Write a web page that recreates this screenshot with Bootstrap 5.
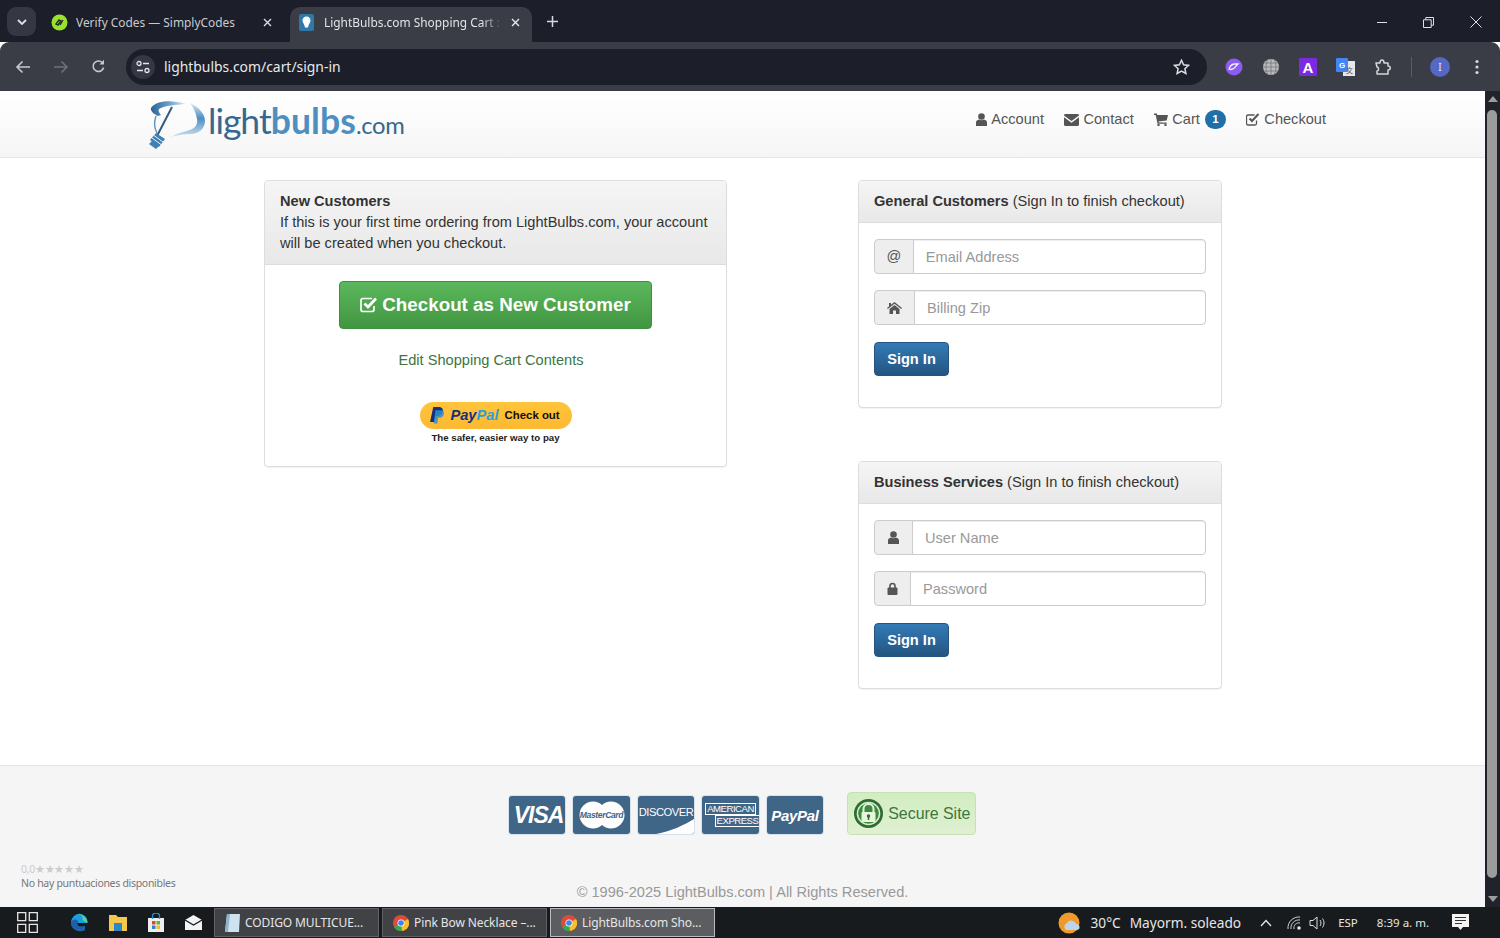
<!DOCTYPE html>
<html lang="en"><head><meta charset="utf-8"><title>LightBulbs.com Shopping Cart</title>
<link href="https://cdn.jsdelivr.net/npm/bootstrap@5.3.0/dist/css/bootstrap.min.css" rel="stylesheet">
<style>
html,body{height:938px;overflow:hidden;margin:0}
body{font-family:"Liberation Sans",Arial,sans-serif;font-size:14.6px;line-height:21px;color:#333;background:#fff}
.shell{height:938px}
.tabstrip{height:42px;background:#1c1f2a;font-family:"Noto Sans",sans-serif;font-size:11.9px;color:#c9cad0;padding-left:7px}
.tabmenu{width:29px;height:29px;background:#353842;border-radius:9px;margin-top:7px;flex:none}
.ctab{height:35px;margin-top:7px;width:242px;flex:none;padding:0 12px 5px 9px;border-radius:10px 10px 0 0;white-space:nowrap;overflow:hidden}
.ctab.first{width:241px;margin-left:6px;padding-left:9px;margin-right:7px;padding-right:11px}
.ctab.active{background:#3a3c46;color:#e3e4e8}
.tabtitle{flex:1;overflow:hidden;margin-left:8px;min-width:0}
.active .tabtitle{-webkit-mask-image:linear-gradient(90deg,#000 88%,transparent);mask-image:linear-gradient(90deg,#000 88%,transparent)}
.plusx{margin:16px 0 0 15px}
.winbtns{margin-left:auto;gap:36px;padding:2px 18px 0 0}
.toolbarx{height:49px;background:#3a3c46;border-radius:9px 9px 0 0;padding:0 9px 0 15px}
.omni{margin:0 0 0 15px;width:1081px;height:36px;background:#1c1f2a;border-radius:18px;color:#e8e9ec;font-family:"Noto Sans",sans-serif;font-size:13.9px;padding:0 17px 0 5px}
.sitebtn{width:24px;height:24px;border-radius:50%;background:#353842;margin-right:9px}
.navgap{gap:22px;width:96px}
.ext{gap:19px;margin-left:18px}
.sepv{width:1px;height:20px;background:#5a5c66;margin:0 -1px 0 0}
.avatarx{width:20px;height:20px;border-radius:50%;background:#5468c4;color:#e8eaf6;font:10px "Noto Sans",sans-serif}
.dotsx{margin-left:6px}
.pagewrap{height:816px;min-height:0}
.pagecol{flex:1;min-width:0}
.topbar{height:67px;background:linear-gradient(#fff,#f6f6f6);border-bottom:1px solid #e6e6e6;padding:0 159px 0 148px;align-items:flex-start}
.logobox{margin-top:8px;height:50px;width:256px;position:relative}
.logoword{font-family:"Lato",sans-serif;font-size:35.5px;line-height:50px;color:#35688f;font-weight:400;letter-spacing:-1px;margin-left:60px;white-space:nowrap;margin-top:-3px;display:block}
.logoword b{color:#4e8fc0;font-weight:700;letter-spacing:.1px}
.logoword i{font-style:normal;font-size:23.8px;letter-spacing:-.3px}
.toplinks{gap:20.5px;margin-top:18px;color:#555;line-height:21px}
.toplinks a{color:#555;text-decoration:none;display:flex;align-items:center;gap:4px;white-space:nowrap}
.cartnum{background:#1f6fa8;color:#fff;font-size:11.5px;width:21px;height:19px;border-radius:10px;padding:0;line-height:19px;margin-left:1px;font-weight:700}
.contentx{flex:1;min-height:0;padding:22px 263px 0 264px;justify-content:space-between}
.leftc{width:463px}
.rightc{width:364px;gap:53px}
.panelx{border-color:#ddd;border-radius:4px;box-shadow:0 1px 1px rgba(0,0,0,.05)}
.panelx .card-header{background:linear-gradient(#f5f5f5,#e8e8e8);border-bottom:1px solid #ddd;padding:10px 15px;color:#333;line-height:21px;border-radius:3px 3px 0 0}
.headtxt b{color:#333}
.panelx .card-body{padding:16px 15px}
.bigbtn{width:313px;height:48px;background:linear-gradient(#5cb85c,#419641);border:1px solid #3e8f3e;color:#fff;font-weight:700;font-size:18.8px;line-height:1;border-radius:4px;gap:4px;padding:0}
.bigbtn:hover{color:#fff}
.editlink{color:#3c763d;text-decoration:none;margin:21px 9px 0 0;text-align:center;display:block}
.ppbox{margin-top:31px;height:48px}
.pp{width:152px;height:27px;background:linear-gradient(#ffc439,#fdb933);border-radius:14px;gap:5px;color:#111;padding-right:1px}
.pp .ppw{font-weight:700;font-style:italic;font-size:14.7px;color:#17307a}
.pp .ppw span{color:#2a9fde}
.pp .ppc{font-weight:700;font-size:11.4px;margin-left:1px}
.ppcap{font-size:9.7px;line-height:12px;font-weight:700;color:#222;text-align:center;margin-top:3px;white-space:nowrap}
.inrow{margin-bottom:16px;height:35px}
.inrow .input-group-text{background:#eee;border-color:#ccc;color:#555;padding:0 12px;font-size:14.6px;border-radius:4px 0 0 4px;justify-content:center}
.inrow .form-control{border-color:#ccc;font-size:14.6px;padding:0 12px;height:35px;color:#555;border-radius:0 4px 4px 0;box-shadow:inset 0 1px 1px rgba(0,0,0,.075)}
.inrow .form-control::placeholder{color:#999}
.inrow .atsign{padding:0 11.5px}
.signbtn{width:75px;height:34px;background:linear-gradient(#337ab7,#245580);border:1px solid #245580;color:#fff;font-weight:700;font-size:14.6px;padding:0;line-height:1;border-radius:4px;margin:1px 0 15px}
.footx{height:142px;background:#f5f5f5;border-top:1px solid #e5e5e5;position:relative;flex:none;padding-top:30px}
.payrow{gap:8px;height:44px}
.paycard{width:56.5px;height:38px;background:#3f6587;border-radius:3px;color:#fff;font-weight:700;overflow:hidden;position:relative;line-height:1;box-shadow:0 0 0 1px rgba(120,170,220,.25)}
.pcvisa{font-size:23px;letter-spacing:-1px;margin-left:3px}
.pcmc{font-size:8.6px;color:#3f6587;letter-spacing:-.4px;position:relative}
.pcdisc{font-size:11.2px;letter-spacing:-.5px;padding-top:11px;font-weight:400}
.pcamex{font-size:9.6px;letter-spacing:-.5px;font-weight:400;gap:2px}
.pcamex span{outline:1px solid #fff;padding:0 1px;line-height:10px}
.pcamex .ax2{margin-left:14px}
.pcpay{font-size:15px;letter-spacing:-.3px}
.securex{margin-left:16px;width:129px;height:43px;background:linear-gradient(#d2edc2,#dff0d0);border:1px solid #c5e3b2;border-radius:4px;color:#3c763d;font-size:15.9px;gap:4px;padding-left:5px;margin-top:-4px;white-space:nowrap}
.copyx{color:#999;font-size:14.6px;text-align:center;margin-top:42px;line-height:21px}
.ratex{position:absolute;left:21px;top:96px;font-family:"Noto Sans",sans-serif;font-size:10.5px;line-height:14px;color:#777;letter-spacing:-.3px}
.ratex div:first-child{color:#ccc}
.scrollx{width:15px;flex:none;background:#20232a;position:relative}
.thumbx{position:absolute;left:2px;right:3px;top:19px;bottom:29px;background:#9c9c9c;border-radius:5px}
.scup{position:absolute;top:5px;left:3px}
.scdn{position:absolute;bottom:5px;left:3px}
.taskx{height:31px;background:#181b1e;color:#e6e6e6;font-family:"Noto Sans",sans-serif;padding-left:17px}
.pinned{gap:21px;margin:0 12px 0 32px}
.tbutton{height:29px;width:165px;background:#404246;border:1px solid #5f6165;font-size:12px;letter-spacing:-.1px;padding-left:10px;gap:5px;margin-right:3px;white-space:nowrap}
.tbutton.on{background:#5b5d61;border-color:#b8bcc0}
.tray{margin-left:auto;font-size:13.7px;padding-right:31px}
.wxic{margin-right:8px}
.wxt{margin-left:9px}
.tchev{margin-left:17px}
.twifi{margin-left:13px}
.tsnd{margin-left:7px}
.tesp{font-size:11.5px;margin-left:11px}
.ttime{font-size:11.5px;margin-left:19px}
.tnote{margin-left:23px}
</style></head><body>
<div class="shell d-flex flex-column">
 <div class="tabstrip d-flex">
  <div class="tabmenu d-flex align-items-center justify-content-center"><svg width="10" height="6" viewBox="0 0 10 6"><path d="M1 1l4 4 4-4" fill="none" stroke="#dfe0e4" stroke-width="1.8"/></svg></div>
  <div class="ctab first d-flex align-items-center"><svg width="17" height="17" viewBox="0 0 17 17"><circle cx="8.5" cy="8.5" r="8" fill="#9be22d"/><path d="M5 10l3-4 2 1-3 4zM9 11l3-5" stroke="#20302a" stroke-width="1.4" fill="none"/></svg><span class="tabtitle">Verify Codes — SimplyCodes</span><svg width="9" height="9" viewBox="0 0 9 9"><path d="M1 1l7 7M8 1l-7 7" stroke="#dcdde1" stroke-width="1.4"/></svg></div>
  <div class="ctab active d-flex align-items-center"><svg width="17" height="17" viewBox="0 0 17 17"><rect width="15" height="17" rx="2" fill="#2f78a8"/><path d="M7.500 2.500c2.600 0 4 1.800 4 4 0 2.300-2 3.500-2.500 7H6c-.5-3.500-2.500-4.700-2.500-7 0-2.200 1.400-4 4-4z" fill="#fff"/></svg><span class="tabtitle">LightBulbs.com Shopping Cart :</span><svg width="9" height="9" viewBox="0 0 9 9" class="ms-2"><path d="M1 1l7 7M8 1l-7 7" stroke="#e8e9ec" stroke-width="1.4"/></svg></div>
  <svg class="plusx" width="11" height="11" viewBox="0 0 11 11"><path d="M5.500 0v11M0 5.500h11" stroke="#d8d9dd" stroke-width="1.5"/></svg>
  <div class="winbtns d-flex align-items-center">
   <svg width="10" height="10" viewBox="0 0 10 10"><path d="M0 5.500h10" stroke="#e0e1e4" stroke-width="1"/></svg>
   <svg width="11" height="11" viewBox="0 0 11 11"><path d="M.5 2.800h7.700v7.700H.5zM2.800 2.800V.5h7.700v7.700H8.200" fill="none" stroke="#e0e1e4"/></svg>
   <svg width="12" height="12" viewBox="0 0 12 12"><path d="M.5.500l11 11M11.500.5l-11 11" stroke="#e0e1e4"/></svg>
  </div>
 </div>
 <div class="toolbarx d-flex align-items-center">
  <div class="navgap d-flex align-items-center">
   <svg width="16" height="14" viewBox="0 0 16 14"><path d="M15 7H2M7.500 1.500L2 7l5.500 5.500" fill="none" stroke="#c8c9ce" stroke-width="1.6"/></svg>
   <svg width="16" height="14" viewBox="0 0 16 14"><path d="M1 7h13M8.500 1.500L14 7l-5.500 5.500" fill="none" stroke="#6f717a" stroke-width="1.600"/></svg>
   <svg width="15" height="15" viewBox="0 0 15 15"><path d="M12.600 8.500A5.300 5.300 0 1 1 11 3.300" fill="none" stroke="#c8c9ce" stroke-width="1.600"/><path d="M13 .8v4.600H8.500z" fill="#c8c9ce"/></svg>
  </div>
  <div class="omni d-flex align-items-center">
   <div class="sitebtn d-flex align-items-center justify-content-center"><svg width="14" height="14" viewBox="0 0 14 14"><circle cx="3" cy="3.500" r="2" fill="none" stroke="#e4e5e8" stroke-width="1.300"/><path d="M7 3.500h6M1 10.500h6" stroke="#e4e5e8" stroke-width="1.400"/><circle cx="11" cy="10.500" r="2" fill="none" stroke="#e4e5e8" stroke-width="1.300"/></svg></div>
   <span>lightbulbs.com/cart/sign-in</span>
   <svg class="ms-auto" width="17" height="16" viewBox="0 0 17 16"><path d="M8.500 1.300l2.100 4.500 4.900.6-3.600 3.300 1 4.800-4.400-2.400-4.400 2.400 1-4.800L1.500 6.400l4.900-.6z" fill="none" stroke="#dcdde1" stroke-width="1.500"/></svg>
  </div>
  <div class="ext d-flex align-items-center">
   <svg width="18" height="18" viewBox="0 0 18 18"><circle cx="9" cy="9" r="8.500" fill="#8b5cf0"/><path d="M4 11c2 1 5 0 7-3l2-2-3 0c-3 0-5 2-6 5z" fill="none" stroke="#f2ecff" stroke-width="1.300"/></svg>
   <svg width="18" height="18" viewBox="0 0 18 18"><circle cx="9" cy="9" r="8" fill="#b9babd"/><path d="M1 9h16M2.500 5h13M2.500 13h13M9 1v16M5.500 2c-2 4-2 10 0 14M12.500 2c2 4 2 10 0 14" stroke="#6d6e72" stroke-width=".7" fill="none"/></svg>
   <svg width="18" height="18" viewBox="0 0 18 18"><rect width="18" height="18" rx="1" fill="#7a2be2"/><text x="9" y="14.500" font-family="Liberation Sans" font-weight="700" font-size="15" text-anchor="middle" fill="#fff">A</text></svg>
   <svg width="19" height="18" viewBox="0 0 19 18"><rect x="7" y="3" width="12" height="15" fill="#e6e7ea"/><rect width="12" height="14" rx="1" fill="#4285f4"/><text x="6" y="10" font-family="Liberation Sans" font-weight="700" font-size="8" text-anchor="middle" fill="#fff">G</text><text x="13.500" y="15" font-family="Noto Sans CJK SC" font-size="7" text-anchor="middle" fill="#555">文</text></svg>
   <svg width="18" height="18" viewBox="0 0 18 18"><path d="M2 5h4c0-4 4-4 4 0h4v3c3 0 3 4 0 4v4H3v-3c2 0 2-4 0-4z" fill="none" stroke="#d6d7db" stroke-width="1.500" stroke-linejoin="round"/></svg>
   <div class="sepv"></div>
   <div class="avatarx d-flex align-items-center justify-content-center">I</div>
   <svg class="dotsx" width="4" height="16" viewBox="0 0 4 16"><circle cx="2" cy="2.500" r="1.600" fill="#d6d7db"/><circle cx="2" cy="8" r="1.600" fill="#d6d7db"/><circle cx="2" cy="13.500" r="1.600" fill="#d6d7db"/></svg>
  </div>
 </div>
 <div class="pagewrap d-flex">
  <div class="pagecol d-flex flex-column">
   <nav class="navbar topbar flex-nowrap d-flex justify-content-between">
    <a class="logobox text-decoration-none" href="#">
     <svg class="position-absolute top-0 start-0" width="62" height="50" viewBox="0 0 62 50"><defs><linearGradient id="lg" x1="0" x2="1" y1="0" y2="0"><stop offset="0" stop-color="#2b628f"/><stop offset=".55" stop-color="#6fa6cf"/><stop offset="1" stop-color="#e3edf5"/></linearGradient><linearGradient id="lc" x1="0" x2="0" y1="0" y2="1"><stop offset="0" stop-color="#dfeaf3"/><stop offset=".45" stop-color="#4a8fc3"/><stop offset="1" stop-color="#cfe0ee"/></linearGradient></defs>
      <path d="M3 9C7 2 22 0 38 5c-10 1-21 1-27 5-1 1 0 4 2 6l-3 1C6 15 2 12 3 9z" fill="url(#lg)"/>
      <path d="M24 8L9 37" stroke="#2f5d85" stroke-width="2" fill="none"/>
      <path d="M42 4c9 4 15 11 15 18 0 8-7 13-14 13-7 0-13 1-20 3 7-4 13-5 19-7 5-2 8-5 7-11-1-5-3-11-7-16z" fill="url(#lc)"/>
      <path d="M8 17c-2 6-2 12 1 17" stroke="#5c93bd" stroke-width="1.400" fill="none"/>
      <path d="M2 41l6-7 9 6-6 8zM1 45l3-3 7 5-3 3z" fill="#3f7fb2"/><path d="M4 39l9 6.500M6 36.500l9 6.500" stroke="#fff" stroke-width=".9"/></svg>
     <span class="logoword">light<b>bulbs</b><i>.com</i></span>
    </a>
    <div class="toplinks d-flex">
     <a href="#"><svg width="11" height="13" viewBox="0 0 11 13"><circle cx="5.500" cy="3.500" r="3.300" fill="#555"/><path d="M0 13V9.500C0 7.500 1.500 7 3 6.500c1.500 1 3.500 1 5 0 1.500.5 3 1 3 3V13z" fill="#555"/></svg>Account</a>
     <a href="#"><svg width="15" height="12" viewBox="0 0 15 12"><path d="M0 1.500C0 .6.600 0 1.500 0h12c.9 0 1.500.6 1.500 1.500L7.500 7zM0 3.300l7.500 5.400L15 3.300v7.200c0 .9-.6 1.500-1.500 1.500h-12C.6 12 0 11.400 0 10.500z" fill="#555"/></svg>Contact</a>
     <a href="#"><svg width="14" height="13" viewBox="0 0 14 13"><path d="M0 .5h2.800l.5 1.500H14l-1.300 5.500-8.200 1 .2 1h8v1.300H3.500L1.700 2H0z" fill="#555"/><circle cx="4.500" cy="12" r="1.200" fill="#555"/><circle cx="11.500" cy="12" r="1.200" fill="#555"/></svg>Cart <span class="badge cartnum">1</span></a>
     <a href="#"><svg width="14" height="13" viewBox="0 0 14 13"><path d="M10.500 7.500v3c0 .8-.5 1.500-1.500 1.500H2c-1 0-1.500-.7-1.500-1.500v-7C.5 2.700 1 2 2 2h6.500" fill="none" stroke="#555" stroke-width="1.300"/><path d="M3.500 5.500l2.500 2.500L12.500 1" fill="none" stroke="#555" stroke-width="2"/></svg>Checkout</a>
    </div>
   </nav>
   <main class="contentx d-flex">
    <div class="leftc">
     <section class="card panelx">
      <div class="card-header headtxt"><b>New Customers</b><br>If this is your first time ordering from LightBulbs.com, your account will be created when you checkout.</div>
      <div class="card-body d-flex flex-column align-items-center">
       <a href="#" class="btn bigbtn d-flex align-items-center justify-content-center"><svg width="18" height="16" viewBox="0 0 18 16"><path d="M14 9v3.500c0 1-.7 2-2 2H3c-1.300 0-2-1-2-2v-9c0-1 .7-2 2-2h9" fill="none" stroke="#fff" stroke-width="1.700"/><path d="M4.500 6.500l3.500 3.500L16 1.500" fill="none" stroke="#fff" stroke-width="2.700"/></svg>Checkout as New Customer</a>
       <a href="#" class="editlink">Edit Shopping Cart Contents</a>
       <div class="ppbox">
        <div class="pp d-flex align-items-center justify-content-center"><svg width="15" height="17" viewBox="0 0 14 16"><path d="M3 0h5c3 0 4.500 1.500 4 4-.5 3-2.500 4.500-5 4.500H5L4 14H0z" fill="#17307a"/><path d="M5 3h5c2.500 0 3.500 1.500 3 3.500C12.500 9 11 10 9 10H7.500L7 15.500H3.500z" fill="#2a8fd6" opacity=".85"/></svg><span class="ppw">Pay<span>Pal</span></span><span class="ppc">Check out</span></div>
        <div class="ppcap">The safer, easier way to pay</div>
       </div>
      </div>
     </section>
    </div>
    <div class="rightc d-flex flex-column">
     <section class="card panelx">
      <div class="card-header headtxt"><b>General Customers</b> (Sign In to finish checkout)</div>
      <div class="card-body">
       <div class="input-group inrow"><span class="input-group-text atsign">@</span><input class="form-control" placeholder="Email Address"></div>
       <div class="input-group inrow"><span class="input-group-text"><svg width="15" height="12" viewBox="0 0 15 12"><path d="M7.500 0L15 6l-.8 1-6.700-5.300L.8 7 0 6l2-1.600V1h2v1.800z" fill="#555"/><path d="M2.500 7l5-4 5 4v5H9V8.500H6V12H2.500z" fill="#555"/></svg></span><input class="form-control" placeholder="Billing Zip"></div>
       <button class="btn signbtn">Sign In</button>
      </div>
     </section>
     <section class="card panelx">
      <div class="card-header headtxt"><b>Business Services</b> (Sign In to finish checkout)</div>
      <div class="card-body">
       <div class="input-group inrow"><span class="input-group-text"><svg width="13" height="13" viewBox="0 0 11 13"><circle cx="5.500" cy="3.500" r="3.300" fill="#555"/><path d="M0 13V9.500C0 7.500 1.500 7 3 6.500c1.500 1 3.500 1 5 0 1.500.5 3 1 3 3V13z" fill="#555"/></svg></span><input class="form-control" placeholder="User Name"></div>
       <div class="input-group inrow"><span class="input-group-text"><svg width="11" height="13" viewBox="0 0 10 13"><path d="M2.500 6V4a2.500 2.500 0 0 1 5 0v2" fill="none" stroke="#555" stroke-width="1.600"/><rect y="5.500" width="10" height="7.500" rx="1" fill="#555"/></svg></span><input class="form-control" placeholder="Password"></div>
       <button class="btn signbtn">Sign In</button>
      </div>
     </section>
    </div>
   </main>
   <footer class="footx">
    <div class="payrow d-flex justify-content-center align-items-start">
     <div class="paycard d-flex align-items-center justify-content-center"><i class="pcvisa">VISA</i></div>
     <div class="paycard d-flex align-items-center justify-content-center"><svg width="50" height="30" viewBox="0 0 50 30" class="position-absolute"><circle cx="16" cy="15" r="13.500" fill="#fff"/><circle cx="34" cy="15" r="13.500" fill="#fff"/></svg><i class="pcmc">MasterCard</i></div>
     <div class="paycard pcdisc d-flex justify-content-center"><span>DISCOVER</span><svg class="position-absolute bottom-0 start-0" width="57" height="15" viewBox="0 0 57 15"><path d="M18 15C34 12 46 6 56 0v15z" fill="#fff"/></svg></div>
     <div class="paycard pcamex d-flex flex-column align-items-center justify-content-center"><span>AMERICAN</span><span class="ax2">EXPRESS</span></div>
     <div class="paycard d-flex align-items-center justify-content-center"><i class="pcpay">PayPal</i></div>
     <div class="securex d-flex align-items-center"><svg width="31" height="31" viewBox="0 0 31 31"><circle cx="15.500" cy="15.500" r="14.500" fill="#2f6b34"/><circle cx="15.500" cy="15.500" r="11.800" fill="#d6eec8"/><circle cx="15.500" cy="15.500" r="10.300" fill="#3c8a41"/><path d="M10.500 15V11a5 5 0 0 1 10 0v4" fill="none" stroke="#e4f3da" stroke-width="2"/><rect x="8.500" y="14" width="14" height="10" rx="1" fill="#e8f6de"/><circle cx="15.500" cy="18" r="1.700" fill="#2f6b34"/><path d="M15.500 18v4" stroke="#2f6b34" stroke-width="1.500"/></svg><span>Secure Site</span></div>
    </div>
    <div class="copyx">© 1996-2025 LightBulbs.com | All Rights Reserved.</div>
    <div class="ratex"><div>0,0★★★★★</div><div>No hay puntuaciones disponibles</div></div>
   </footer>
  </div>
  <div class="scrollx"><svg class="scup" width="10" height="7" viewBox="0 0 10 7"><path d="M5 0l5 6H0z" fill="#9c9c9c"/></svg><div class="thumbx"></div><svg class="scdn" width="10" height="7" viewBox="0 0 10 7"><path d="M5 7L0 1h10z" fill="#9c9c9c"/></svg></div>
 </div>
 <div class="taskx d-flex align-items-center">
  <svg width="21" height="21" viewBox="0 0 21 21"><path d="M.7.700h8v8h-8zM12.300.700h8v8h-8zM.7 12.300h8v8h-8zM12.300 12.300h8v8h-8z" fill="none" stroke="#e6e6e6" stroke-width="1.300"/></svg>
  <div class="pinned d-flex align-items-center">
   <svg width="18" height="20" viewBox="0 0 18 20"><path d="M1 9c1-6 6-9 10-8 4 1 7 4 6.500 9H7c0 3 3 5 8 3v4c-6 3-13 0-14-8z" fill="#1b9de2"/><path d="M1 9c2-3 5-3 7-1 1 1 0 2-1 2 0 3 3 5 8 3v4C8 20 0 16 1 9z" fill="#1f5fa8"/><path d="M17.500 10c0-4-4-9-10-9 5 1 6 4 5 6z" fill="#5ed48a"/></svg>
   <svg width="18" height="17" viewBox="0 0 18 17"><path d="M0 1h7l2 2h9v14H0z" fill="#f4c84b"/><rect x="5" y="9" width="8" height="8" fill="#2c86c7"/></svg>
   <svg width="16" height="19" viewBox="0 0 16 19"><path d="M0 5h16v14H0z" fill="#eee"/><path d="M4.500 6V3a3.500 3 0 0 1 7 0v3" fill="none" stroke="#1f90d8" stroke-width="1.300"/><rect x="4" y="8" width="3.500" height="3.500" fill="#e0492e"/><rect x="8.500" y="8" width="3.500" height="3.500" fill="#63b32e"/><rect x="4" y="12.500" width="3.500" height="3.500" fill="#2c86c7"/><rect x="8.500" y="12.500" width="3.500" height="3.500" fill="#f4bb2a"/></svg>
   <svg width="17" height="15" viewBox="0 0 17 15"><path d="M0 5l8.500-5L17 5v10H0z" fill="#f4f4f4"/><path d="M0 5l8.500 5L17 5" fill="none" stroke="#181b1e" stroke-width="1.300"/></svg>
  </div>
  <div class="tbutton d-flex align-items-center"><svg width="15" height="19" viewBox="0 0 15 19"><path d="M2 1h13l-1 18H0z" fill="#cfe2ef"/><path d="M2 1L0 19h3L5 1z" fill="#8fb3cc"/></svg><span>CODIGO MULTICUE...</span></div>
  <div class="tbutton d-flex align-items-center"><svg width="16" height="16" viewBox="0 0 16 16"><circle cx="8" cy="8" r="8" fill="#de4b3a"/><path d="M8 8L1 12a8 8 0 0 0 8 4z" fill="#34a853"/><path d="M8 8l1 8a8 8 0 0 0 6-12z" fill="#f6c02c"/><circle cx="8" cy="8" r="3.500" fill="#fff"/><circle cx="8" cy="8" r="2.800" fill="#3f83ee"/></svg><span>Pink Bow Necklace –...</span></div>
  <div class="tbutton on d-flex align-items-center"><svg width="16" height="16" viewBox="0 0 16 16"><circle cx="8" cy="8" r="8" fill="#de4b3a"/><path d="M8 8L1 12a8 8 0 0 0 8 4z" fill="#34a853"/><path d="M8 8l1 8a8 8 0 0 0 6-12z" fill="#f6c02c"/><circle cx="8" cy="8" r="3.500" fill="#fff"/><circle cx="8" cy="8" r="2.800" fill="#3f83ee"/></svg><span>LightBulbs.com Sho...</span></div>
  <div class="tray d-flex align-items-center">
   <svg class="wxic" width="24" height="22" viewBox="0 0 24 22"><circle cx="11" cy="11" r="10.500" fill="#f09a2c"/><path d="M8 18a4 4 0 0 1 1-7 5 5 0 0 1 9 1 3 3 0 0 1 1 6z" fill="#bcd4ec"/></svg>
   <span>30°C</span><span class="wxt">Mayorm. soleado</span>
   <svg class="tchev" width="16" height="8" viewBox="0 0 12 8"><path d="M1 7l5-5.500L11 7" fill="none" stroke="#e6e6e6" stroke-width="1.300"/></svg>
   <svg class="twifi" width="15" height="14" viewBox="0 0 15 14"><path d="M1 13A11 11 0 0 1 13 1M4 13A8 8 0 0 1 13 4M7 13a5 5 0 0 1 6-6" fill="none" stroke="#d0d0d0" stroke-width="1"/><circle cx="12" cy="12" r="1.800" fill="#e6e6e6"/></svg>
   <svg class="tsnd" width="18" height="14" viewBox="0 0 18 14"><path d="M1 4.500h3L8 1v12L4 9.500H1z" fill="none" stroke="#e0e0e0"/><path d="M11 4c1.300 2 1.300 4 0 6M13.500 2.500c2 3 2 6 0 9" fill="none" stroke="#e0e0e0"/></svg>
   <span class="tesp">ESP</span>
   <span class="ttime">8:39 a. m.</span>
   <svg class="tnote" width="17" height="17" viewBox="0 0 17 17"><path d="M0 0h17v13h-6l-2.500 3L6 13H0z" fill="#f4f4f4"/><path d="M3 3.500h11M3 6.500h11M3 9.500h7" stroke="#333" stroke-width="1"/></svg>
  </div>
 </div>
</div>
</body></html>
